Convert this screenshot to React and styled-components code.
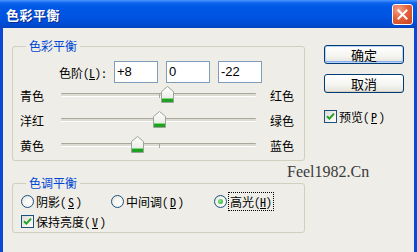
import React from 'react';
import styled, { createGlobalStyle } from 'styled-components';

const GlobalStyle = createGlobalStyle`
  html, body {
    margin: 0;
    padding: 0;
    background: #eeede7;
  }
  body {
    font-family: "Noto Sans CJK SC", "Liberation Sans", sans-serif;
    font-size: 12px;
    color: #000;
    font-feature-settings: "hwid";
  }
`;

const Window = styled.div`
  width: 417px;
  height: 252px;
  overflow: hidden;
  display: flex;
  flex-direction: column;
  background: #0a48d6;
`;

const TitleBar = styled.div`
  height: 28px;
  flex: none;
  display: flex;
  align-items: center;
  justify-content: space-between;
  padding: 0 4px 0 6px;
  background: linear-gradient(to bottom, #4a97ff 0, #0d63ec 3px, #0058e6 7px, #0053e0 18px, #0049cf 26px, #0a40b8 28px);
`;

const Title = styled.span`
  color: #fff;
  font-weight: bold;
  font-size: 13px;
  letter-spacing: 0.5px;
  text-shadow: 1px 1px #0a2a8c;
`;

const CloseButton = styled.div`
  width: 19px;
  height: 19px;
  border: 1px solid #fff;
  border-radius: 3px;
  background: radial-gradient(circle at 30% 25%, #f3a58a 0, #e4623b 45%, #c8421c 100%);
  display: flex;
  align-items: center;
  justify-content: center;
`;

const Frame = styled.div`
  flex: 1;
  margin: 0 3px;
  background: #eeede7;
  display: flex;
  gap: 19px;
  padding: 10px 0 0 9px;
`;

const LeftColumn = styled.div`
  width: 293px;
  flex: none;
  display: flex;
  flex-direction: column;
`;

const Group = styled.fieldset`
  margin: 0;
  padding: 0 0 ${p => p.$bottom || 0}px 0;
  border: 1px solid #d0d0bf;
  border-radius: 3px;
  min-width: 0;
`;

const Legend = styled.legend`
  margin-left: 13px;
  padding: 0 3px;
  color: #0046d5;
  line-height: 16px;
`;

const LevelRow = styled.div`
  display: flex;
  align-items: center;
  height: 22px;
  margin-top: 7px;
  padding-left: 46px;
`;

const LevelLabel = styled.span`
  width: 55px;
  flex: none;
`;

const ValueBox = styled.div`
  width: 40px;
  height: 20px;
  margin-right: 8px;
  border: 1px solid #7f9db9;
  background: #fff;
  font-family: "Liberation Sans", sans-serif;
  font-size: 13px;
  line-height: 20px;
  padding-left: 2px;
  box-sizing: content-box;
`;

const SliderRow = styled.div`
  display: flex;
  align-items: center;
  height: 25px;
  padding-left: 7px;
  &:first-of-type {
    margin-top: 5px;
  }
`;

const SideLabel = styled.span`
  width: ${p => p.$w || 39}px;
  flex: none;
`;

const Slider = styled.div`
  position: relative;
  width: 200px;
  height: 25px;
  margin-right: 11px;
  flex: none;
  &::before {
    content: "";
    position: absolute;
    left: 2px;
    right: 3px;
    top: 10px;
    height: 2px;
    border-top: 1px solid #a9a89c;
    border-bottom: 1px solid #ffffff;
    background: #dedcd2;
    border-radius: 1px;
  }
  &::after {
    content: "";
    position: absolute;
    left: 100px;
    top: 10px;
    width: 1px;
    height: 5px;
    background: #a9a89c;
  }
`;

const Thumb = styled.svg`
  position: absolute;
  top: 3px;
  z-index: 1;
`;

const Watermark = styled.div`
  height: 14px;
  margin: 4px 0 -4px 275px;
  white-space: nowrap;
  font-family: "Liberation Serif", serif;
  font-size: 16px;
  line-height: 14px;
  color: #3a3a3a;
  font-feature-settings: normal;
`;

const OptionRow = styled.div`
  display: flex;
  align-items: center;
  height: 20px;
  padding-left: 8px;
`;

const Option = styled.label`
  display: flex;
  align-items: center;
  gap: 2px;
  width: ${p => (p.$w ? `${p.$w}px` : 'auto')};
  flex: none;
`;

const Radio = styled.span`
  width: 11px;
  height: 11px;
  border: 1px solid #1c5180;
  border-radius: 50%;
  background: radial-gradient(circle at 60% 60%, #fff 0, #f4f4ef 50%, #d8d7cd 100%);
  display: flex;
  align-items: center;
  justify-content: center;
  &::after {
    content: "";
    width: 5px;
    height: 5px;
    border-radius: 50%;
    background: ${p => (p.$on ? 'radial-gradient(circle at 40% 40%, #8be98b, #21a121)' : 'transparent')};
  }
`;

const Focus = styled.span`
  outline: 1px dotted #000;
  outline-offset: 0;
  padding: 0 1px;
`;

const Check = styled.span`
  width: 11px;
  height: 11px;
  flex: none;
  border: 1px solid #1c5180;
  background: linear-gradient(135deg, #dcdbd5, #fff);
  display: flex;
  align-items: center;
  justify-content: center;
`;

const RightColumn = styled.div`
  display: flex;
  flex-direction: column;
  padding-top: 7px;
`;

const Button = styled.div`
  width: 78px;
  height: 17px;
  border: 1px solid #003c74;
  border-radius: 3px;
  background: linear-gradient(to bottom, #ffffff 0, #f4f4f0 60%, #e3e2da 100%);
  box-shadow: ${p => (p.$default ? 'inset 0 0 0 1px #b8d2f7, inset 0 -1px 0 1px #89adef' : 'inset 0 -1px 0 #d6d0c5')};
  display: flex;
  align-items: center;
  justify-content: center;
  font-size: 13px;
  margin-bottom: 10px;
`;

const CheckOption = styled.label`
  display: flex;
  align-items: center;
  gap: 2px;
  margin-top: 5px;
`;

const CheckMark = () => (
  <svg width="9" height="9" viewBox="0 0 9 9">
    <path d="M1 4.2 L3.4 6.6 L8 1.6" fill="none" stroke="#21a121" strokeWidth="2" />
  </svg>
);

const SliderThumb = ({ value }) => (
  <Thumb width="13" height="17" viewBox="0 0 13 17" style={{ left: 94 + value }}>
    <defs>
      <linearGradient id={`tg${value}`} x1="0" y1="0" x2="0" y2="1">
        <stop offset="0" stopColor="#ffffff" />
        <stop offset="1" stopColor="#e6e5de" />
      </linearGradient>
    </defs>
    <path d="M0.5 5.5 L6.5 0.5 L12.5 5.5 V16.5 H0.5 Z" fill={`url(#tg${value})`} stroke="#9aa49a" />
    <rect x="1" y="13" width="11" height="3" fill="#21a121" />
    <rect x="1" y="12" width="11" height="1" fill="#7ad77a" />
  </Thumb>
);

const rows = [
  { left: '青色', right: '红色', value: 8 },
  { left: '洋红', right: '绿色', value: 0 },
  { left: '黄色', right: '蓝色', value: -22 },
];

export default function App() {
  return (
    <Window>
      <GlobalStyle />
      <TitleBar>
        <Title>色彩平衡</Title>
        <CloseButton>
          <svg width="11" height="11" viewBox="0 0 11 11">
            <path d="M1.5 1.5 L9.5 9.5 M9.5 1.5 L1.5 9.5" stroke="#fff" strokeWidth="2" strokeLinecap="square" />
          </svg>
        </CloseButton>
      </TitleBar>
      <Frame>
        <LeftColumn>
          <Group $bottom={2}>
            <Legend>色彩平衡</Legend>
            <LevelRow>
              <LevelLabel>色阶(<u>L</u>):</LevelLabel>
              <ValueBox>+8</ValueBox>
              <ValueBox>0</ValueBox>
              <ValueBox>-22</ValueBox>
            </LevelRow>
            {rows.map(r => (
              <SliderRow key={r.left}>
                <SideLabel>{r.left}</SideLabel>
                <Slider>
                  <SliderThumb value={r.value} />
                </Slider>
                <SideLabel $w={30}>{r.right}</SideLabel>
              </SliderRow>
            ))}
          </Group>
          <Watermark>Feel1982.Cn</Watermark>
          <Group $bottom={1}>
            <Legend>色调平衡</Legend>
            <OptionRow>
              <Option $w={90}><Radio />阴影(<u>S</u>)</Option>
              <Option $w={103}><Radio />中间调(<u>D</u>)</Option>
              <Option><Radio $on /><Focus>高光(<u>H</u>)</Focus></Option>
            </OptionRow>
            <OptionRow>
              <Option><Check><CheckMark /></Check>保持亮度(<u>V</u>)</Option>
            </OptionRow>
          </Group>
        </LeftColumn>
        <RightColumn>
          <Button $default>确定</Button>
          <Button>取消</Button>
          <CheckOption><Check><CheckMark /></Check>预览(<u>P</u>)</CheckOption>
        </RightColumn>
      </Frame>
    </Window>
  );
}
